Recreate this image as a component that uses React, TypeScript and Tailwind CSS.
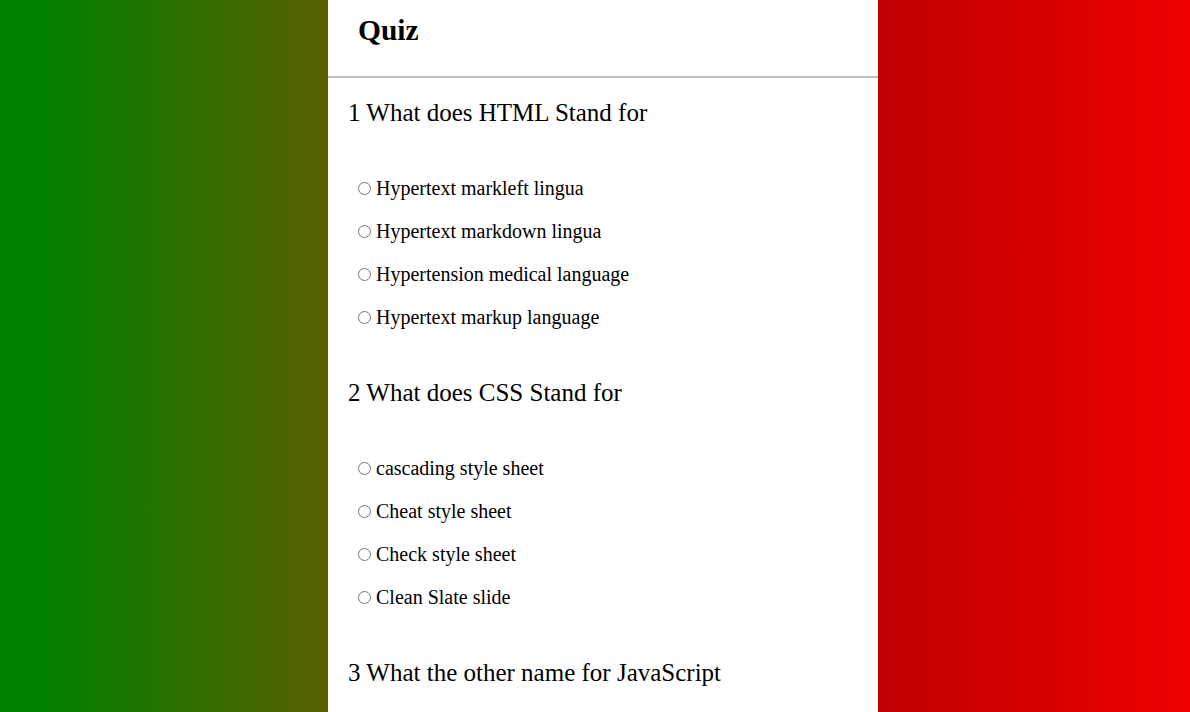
import { useState } from "react";

const questions = [
  {
    title: "What does HTML Stand for",
    options: [
      "Hypertext markleft lingua",
      "Hypertext markdown lingua",
      "Hypertension medical language",
      "Hypertext markup language",
    ],
  },
  {
    title: "What does CSS Stand for",
    options: ["cascading style sheet", "Cheat style sheet", "Check style sheet", "Clean Slate slide"],
  },
  {
    title: "What the other name for JavaScript",
    options: ["ECMAScript", "JScript", "TypeScript", "CoffeeScript"],
  },
];

export default function App() {
  const [answers, setAnswers] = useState<Record<number, string>>({});

  return (
    <div className="min-h-screen bg-[linear-gradient(to_right,#008000_3.4%,#5a6000_27.6%,#bf0000_73.8%,#ef0000_100%)] font-['Liberation_Serif',serif] text-black">
      <div className="ml-[328px] min-h-screen w-[550px] bg-white">
        <header className="h-[78px] border-b-2 border-[#c0c0c0] pl-[30px] pt-[14px]">
          <h1 className="text-[29.5px] font-bold leading-[32px]">Quiz</h1>
        </header>
        <main className="px-[20px] pt-[21px]">
          {questions.map((q, i) => (
            <section key={q.title}>
              <h2 className="text-[25px] leading-[28px]">
                {i + 1} {q.title}
              </h2>
              <ul className="my-[40px]">
                {q.options.map((opt) => (
                  <li key={opt} className="flex items-center py-[10px] pl-[10px] text-[20px] leading-[23px]">
                    <input
                      type="radio"
                      name={`q${i}`}
                      checked={answers[i] === opt}
                      onChange={() => setAnswers((a) => ({ ...a, [i]: opt }))}
                      className="m-0 h-[13px] w-[13px]"
                    />
                    <label className="ml-[5px]">{opt}</label>
                  </li>
                ))}
              </ul>
            </section>
          ))}
        </main>
      </div>
    </div>
  );
}
